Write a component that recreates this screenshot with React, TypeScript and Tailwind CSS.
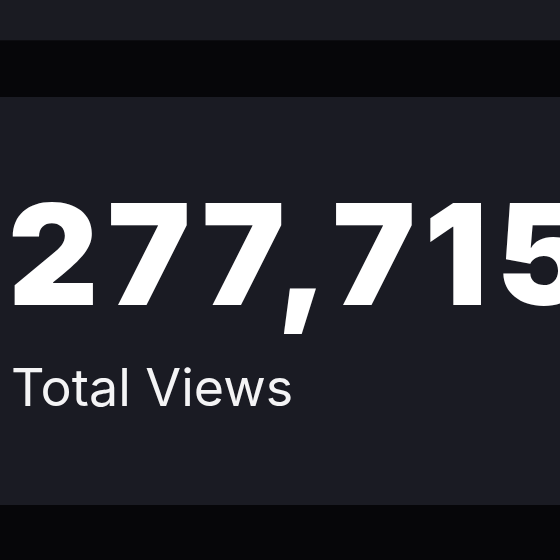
import React from 'react';

export default function App() {
  return (
    <div className="flex flex-col h-[560px] w-[560px] overflow-hidden bg-[#060609] font-['Inter',sans-serif]">
      {/* TOP BAR */}
      <div className="h-[41px] bg-[#1a1b22] border-b border-[#0c0c10]" />

      {/* GAP */}
      <div className="h-[56px]" />

      {/* STAT CARD */}
      <section className="h-[408px] bg-[#1a1b23] flex flex-col pl-[8px] pt-[87px] overflow-hidden">
        <div className="text-[140px] font-black leading-none text-white whitespace-nowrap tracking-[0.062em]">
          277,715
        </div>
        <div className="mt-[38px] pl-[3px] text-[52px] leading-none text-[#f4f4f5] whitespace-nowrap">
          Total Views
        </div>
      </section>
    </div>
  );
}
